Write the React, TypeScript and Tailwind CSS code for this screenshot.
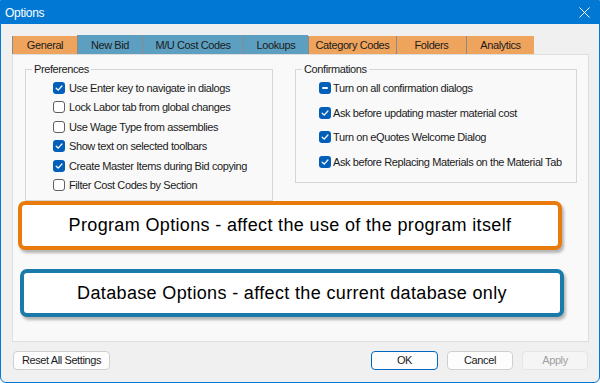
import React from 'react';

type CheckState = 'on' | 'off' | 'mixed';

const tabs = [
  { label: 'General', w: 'w-[65px]', blue: false },
  { label: 'New Bid', w: 'w-[65px]', blue: true },
  { label: 'M/U Cost Codes', w: 'w-[101px]', blue: true },
  { label: 'Lookups', w: 'w-[65px]', blue: true },
  { label: 'Category Codes', w: 'w-[88px]', blue: false },
  { label: 'Folders', w: 'w-[70px]', blue: false },
  { label: 'Analytics', w: 'w-[68px]', blue: false },
];

const preferences: [string, CheckState][] = [
  ['Use Enter key to navigate in dialogs', 'on'],
  ['Lock Labor tab from global changes', 'off'],
  ['Use Wage Type from assemblies', 'off'],
  ['Show text on selected toolbars', 'on'],
  ['Create Master Items during Bid copying', 'on'],
  ['Filter Cost Codes by Section', 'off'],
];

const confirmations: [string, CheckState][] = [
  ['Turn on all confirmation dialogs', 'mixed'],
  ['Ask before updating master material cost', 'on'],
  ['Turn on eQuotes Welcome Dialog', 'on'],
  ['Ask before Replacing Materials on the Material Tab', 'on'],
];

const Checkbox: React.FC<{ state: CheckState }> = ({ state }) => {
  if (state === 'off') {
    return <span className="w-[12px] h-[12px] shrink-0 rounded-[3px] border border-[#5f5f5f] bg-white" />;
  }
  return (
    <span className="w-[12px] h-[12px] shrink-0 rounded-[3px] bg-[#005fb8] flex items-center justify-center">
      {state === 'on' ? (
        <svg width="10" height="10" viewBox="0 0 10 10" fill="none">
          <path d="M2.2 5.2 L4.2 7.1 L7.9 3" stroke="white" strokeWidth="1.3" strokeLinecap="round" strokeLinejoin="round" />
        </svg>
      ) : (
        <span className="w-[6px] h-[2px] bg-white rounded-[1px]" />
      )}
    </span>
  );
};

const Callout: React.FC<{ text: string; border: string; extra: string }> = ({ text, border, extra }) => (
  <div
    className={`w-[544px] flex items-center justify-center bg-white border-[4px] rounded-[7px] shadow-[2px_3px_3px_rgba(0,0,0,0.28)] ${border} ${extra}`}
  >
    <span className="text-[18px] tracking-[0.35px] text-black font-['Liberation_Sans',Arial,sans-serif]">{text}</span>
  </div>
);

export default function App() {
  return (
    <div className="w-[600px] h-[383px] bg-white">
      <div className="w-[600px] h-[383px] flex flex-col bg-[#f0f0f0] border border-[#0078d4] rounded-b-[6px] overflow-hidden font-['Liberation_Sans',Arial,sans-serif] text-[11px] tracking-[-0.4px] text-[#1b1b1b]">
        {/* title bar */}
        <div className="h-[23px] shrink-0 bg-[#0078d4] flex items-center justify-between pl-[4px] pr-[9px]">
          <span className="text-white text-[12px] tracking-[-0.3px]">Options</span>
          <svg width="11" height="11" viewBox="0 0 11 11">
            <path d="M0.5 0.5 L10.5 10.5 M10.5 0.5 L0.5 10.5" stroke="white" strokeWidth="1" />
          </svg>
        </div>

        <div className="flex flex-col px-[11px] pt-[12px]">
          {/* tabs */}
          <div className="flex h-[18px] items-center">
            {tabs.map((t) => (
              <div
                key={t.label}
                className={`${t.w} flex items-center justify-center border-l border-[#8a8a8a] text-[11px] ${
                  t.blue ? 'h-[21px] bg-[#5c9fc0] border-[#4a87a6]' : 'h-[18px] bg-[#efa45e]'
                }`}
              >
                {t.label}
              </div>
            ))}
          </div>

          {/* tab page */}
          <div className="h-[288px] w-[577px] border border-[#dedede] bg-[#f9f9f9] pt-[7px]">
            <div className="flex items-start">
              <fieldset className="ml-[12px] w-[248px] h-[139px] border border-[#d6d6d6]">
                <legend className="ml-[6px] px-[2px] leading-[14px] text-[11px]">Preferences</legend>
                <div className="pl-[27px] pt-[2px]">
                  {preferences.map(([label, s]) => (
                    <div key={label} className="h-[19.5px] flex items-center gap-[4px]">
                      <Checkbox state={s} />
                      <span>{label}</span>
                    </div>
                  ))}
                </div>
              </fieldset>

              <fieldset className="ml-[22px] w-[282px] h-[121px] border border-[#d6d6d6]">
                <legend className="ml-[6px] px-[2px] leading-[14px] text-[11px]">Confirmations</legend>
                <div className="pl-[23px]">
                  {confirmations.map(([label, s]) => (
                    <div key={label} className="h-[24.5px] flex items-center gap-[2px]">
                      <Checkbox state={s} />
                      <span>{label}</span>
                    </div>
                  ))}
                </div>
              </fieldset>
            </div>

            <Callout
              text="Program Options - affect the use of the program itself"
              border="border-[#e97b0c]"
              extra="h-[49px] ml-[5px]"
            />
            <Callout
              text="Database Options - affect the current database only"
              border="border-[#1a7bab]"
              extra="h-[48px] ml-[7px] mt-[19px]"
            />
          </div>

          {/* buttons */}
          <div className="mt-[9px] flex items-center">
            <button className="w-[97px] h-[19px] ml-[1px] bg-[#fdfdfd] border border-[#cfcfcf] rounded-[4px] text-[11px]">
              Reset All Settings
            </button>
            <div className="ml-auto flex gap-[9px]">
              <button className="w-[67px] h-[19px] bg-[#fdfdfd] border-[1.5px] border-[#0067c0] rounded-[4px] text-[11px]">
                OK
              </button>
              <button className="w-[66px] h-[19px] bg-[#fdfdfd] border border-[#cfcfcf] rounded-[4px] text-[11px]">
                Cancel
              </button>
              <button className="w-[66px] h-[19px] bg-[#f5f5f5] border border-[#e5e5e5] rounded-[4px] text-[11px] text-[#a0a0a0]">
                Apply
              </button>
            </div>
          </div>
        </div>
      </div>
    </div>
  );
}
